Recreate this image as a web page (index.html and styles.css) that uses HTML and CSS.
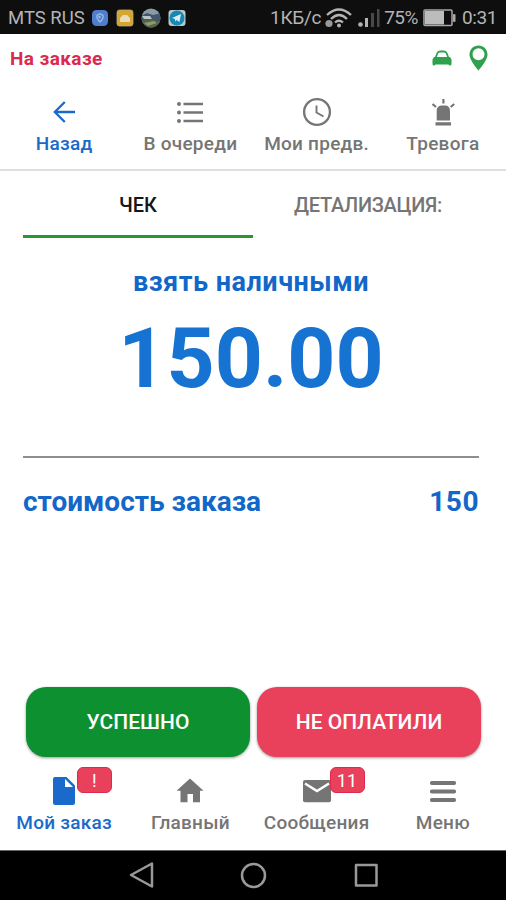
FILE: index.html
```
<!DOCTYPE html>
<html lang="ru">
<head>
    <meta charset="UTF-8">
    <meta name="viewport" content="width=device-width, initial-scale=1.0">
    <title>Мой заказ</title>
    <link rel="stylesheet" href="styles.css">
</head>
<body>
    <div class="phone">
        <div class="status-bar">
            <span class="carrier">MTS RUS</span>
            <div class="notifications">
                <svg width="18" height="18" viewBox="0 0 18 18">
                    <rect x="1" y="1" width="16" height="16" rx="4.500" fill="#4f7fcb"/>
                    <path d="M6 6.500Q9 3.500 12 6.500Q13 9 9 13Q5 9 6 6.500Z" fill="none" stroke="#9dbbe8" stroke-width="1.300"/>
                    <circle cx="8.500" cy="8" r="1.200" fill="#9dbbe8"/>
                </svg>
                <svg width="18" height="18" viewBox="0 0 18 18">
                    <rect x="1" y="1" width="16" height="16" rx="2.500" fill="#d5a52f" stroke="#b9a982" stroke-width="0.800"/>
                    <path d="M4 13V9L7 6H11L14 9V13Z" fill="#e6dcb9"/>
                </svg>
                <svg width="20" height="20" viewBox="0 0 20 20">
                    <clipPath id="avatar"><circle cx="10" cy="10" r="9.500"/></clipPath>
                    <g clip-path="url(#avatar)">
                        <rect width="20" height="20" fill="#8b9aa9"/>
                        <path d="M0 8L6 5L12 7L20 5V14H0Z" fill="#46566a"/>
                        <path d="M1 8H9L11 11H3Z" fill="#b9c3c8"/>
                        <path d="M0 13L10 11L20 14V20H0Z" fill="#536544"/>
                        <path d="M3 15L13 13L16 15L7 18Z" fill="#8c9a73"/>
                    </g>
                </svg>
                <svg width="18" height="18" viewBox="0 0 18 18">
                    <rect x="0.500" y="1" width="17" height="16" rx="3" fill="#b7c9cb"/>
                    <circle cx="9" cy="9" r="7.500" fill="#1688b5"/>
                    <path d="M4 9L13 5L11.500 13L8.500 11L7 12.500V10Z" fill="#dfebed"/>
                </svg>
            </div>
            <div class="status-right">
                <span class="speed">1КБ/с</span>
                <svg class="wifi" width="27" height="20" viewBox="0 0 27 20" fill="none" stroke="#b4b4b4" stroke-width="2.300">
                    <path d="M2 7Q14 -4 26 7M6 11Q14 3 22 11M10 14.500Q14 11 18 14.500"/>
                    <circle cx="14" cy="17.500" r="2" fill="#b4b4b4" stroke="none"/>
                    <circle cx="4" cy="15.500" r="3.600" fill="#999" stroke="none"/>
                </svg>
                <svg class="signal" width="22" height="20" viewBox="0 0 22 20">
                    <circle cx="2.500" cy="16.500" r="2.300" fill="#b4b4b4"/>
                    <rect x="7" y="10" width="3" height="9" fill="#b4b4b4"/>
                    <rect x="13" y="5" width="3" height="14" fill="#484848"/>
                    <rect x="19" y="1" width="2.500" height="18" fill="#484848"/>
                </svg>
                <span class="percent">75%</span>
                <svg class="battery" width="33" height="18" viewBox="0 0 33 18">
                    <rect x="1" y="1" width="28" height="15.500" rx="1" fill="#0e0e0e" stroke="#a9a9a9" stroke-width="1.500"/>
                    <rect x="2" y="2" width="19" height="13.500" fill="#bcbcbc"/>
                    <rect x="30" y="5" width="2.500" height="8" rx="1" fill="#a9a9a9"/>
                </svg>
                <span class="time">0:31</span>
            </div>
        </div>

        <div class="order-state">
            <span class="order-label">На заказе</span>
            <svg class="car" width="20" height="16" viewBox="0 0 20 16">
                <path d="M0.500 14V9.500L2 7H3L4.500 3Q5.500 0.500 8 0.500H12Q14.500 0.500 15.500 3L17 7H18L19.500 9.500V14Q19.500 15.500 18 15.500Q16.800 15.500 16.500 14.500H3.500Q3.200 15.500 2 15.500Q0.500 15.500 0.500 14Z" fill="#2fa14d"/>
                <path d="M4.800 7L6.200 3.600Q6.700 2.500 8 2.500H12Q13.300 2.500 13.800 3.600L15.200 7Z" fill="#fff"/>
            </svg>
            <svg class="pin" width="19" height="26" viewBox="0 0 19 26">
                <path d="M9.500 0.500C4.400 0.500 0.500 4.400 0.500 9.500C0.500 15.500 9.500 25.500 9.500 25.500S18.500 15.500 18.500 9.500C18.500 4.400 14.600 0.500 9.500 0.500ZM9.500 15.300A6 6 0 1 1 9.500 3.300A6 6 0 0 1 9.500 15.300Z" fill="#2fa14d"/>
            </svg>
        </div>

        <nav class="top-nav">
            <a class="nav-item active">
                <svg width="30" height="30" viewBox="0 0 30 30" fill="none" stroke="#1a6acb" stroke-width="2.300">
                    <path d="M26 15H6M15.800 5L5.800 15L15.800 25"/>
                </svg>
                <span>Назад</span>
            </a>
            <a class="nav-item">
                <svg width="30" height="30" viewBox="0 0 30 30" fill="#757575">
                    <path d="M8.500 5.700H28V8.200H8.500ZM8.500 14.200H28V16.700H8.500ZM8.500 22.700H28V25.200H8.500Z"/>
                    <circle cx="4" cy="7" r="2"/><circle cx="4" cy="15.400" r="2"/><circle cx="4" cy="23.900" r="2"/>
                </svg>
                <span>В очереди</span>
            </a>
            <a class="nav-item">
                <svg width="30" height="30" viewBox="0 0 30 30" fill="none" stroke="#757575" stroke-width="2.300">
                    <circle cx="15" cy="15" r="12.900"/>
                    <path d="M14.500 8.500V15.500L21.500 19.500" stroke-width="1.900"/>
                </svg>
                <span>Мои предв.</span>
            </a>
            <a class="nav-item">
                <svg width="30" height="30" viewBox="0 0 30 30" fill="#757575">
                    <path d="M8.700 23.500V14Q8.700 8.500 14 8.500H17Q22 8.500 22 14V23.500ZM7.500 25.300H23V28.500H7.500Z"/>
                    <path d="M15.400 2V6.500M4.500 7L8 10M26.200 7L22.700 10" stroke="#757575" stroke-width="2.200"/>
                </svg>
                <span>Тревога</span>
            </a>
        </nav>

        <main class="content">
            <div class="tabs">
                <div class="tab selected">ЧЕК</div>
                <div class="tab details">ДЕТАЛИЗАЦИЯ:</div>
            </div>
            <div class="total">
                <div class="total-label">взять наличными</div>
                <div class="total-sum">150.00</div>
            </div>
            <div class="cost-row">
                <span class="cost-label">стоимость заказа</span>
                <span class="cost-value">150</span>
            </div>
        </main>

        <div class="actions">
            <button class="btn success">УСПЕШНО</button>
            <button class="btn danger">НЕ ОПЛАТИЛИ</button>
        </div>

        <nav class="bottom-nav">
            <a class="nav-item active">
                <svg width="30" height="30" viewBox="0 0 30 30">
                    <path d="M6 1H17.500L26 9.500V26.500Q26 29 23.500 29H6.500Q4 29 4 26.500V3Q4 1 6 1Z" fill="#1a6acb"/>
                    <path d="M16 3V11H24Z" fill="#fff"/>
                </svg>
                <span class="badge">!</span>
                <span>Мой заказ</span>
            </a>
            <a class="nav-item">
                <svg width="30" height="30" viewBox="0 0 30 30">
                    <path d="M15 2.500L28.500 14.800H25V26.300H18V18H12.500V26.300H5.500V14.800H1.500Z" fill="#757575"/>
                </svg>
                <span>Главный</span>
            </a>
            <a class="nav-item">
                <svg width="30" height="30" viewBox="0 0 30 30">
                    <rect x="1" y="4" width="28" height="22.300" rx="2" fill="#757575"/>
                    <path d="M3 7.500L15 15L27 7.500" fill="none" stroke="#fff" stroke-width="2.500"/>
                </svg>
                <span class="badge">11</span>
                <span>Сообщения</span>
            </a>
            <a class="nav-item">
                <svg width="30" height="30" viewBox="0 0 30 30" stroke="#757575" stroke-width="3.800" stroke-linecap="round">
                    <path d="M3.800 7H26.200M3.800 15.500H26.200M3.800 24H26.200"/>
                </svg>
                <span>Меню</span>
            </a>
        </nav>

        <div class="system-bar">
            <svg width="28" height="28" viewBox="0 0 28 28"><path d="M5 14L26 2.500V25.500Z"/></svg>
            <svg width="28" height="28" viewBox="0 0 28 28"><circle cx="14.500" cy="14.500" r="11.500"/></svg>
            <svg width="28" height="28" viewBox="0 0 28 28"><rect x="4" y="4" width="20.500" height="20.500"/></svg>
        </div>
    </div>
</body>
</html>
```
FILE: styles.css
```
* {
    box-sizing: border-box;
}

body {
    margin: 0;
    font-family: Roboto, sans-serif;
    background: #fff;
    color: #757575;
}

.phone {
    width: 506px;
    height: 900px;
    display: flex;
    flex-direction: column;
    overflow: hidden;
}

svg {
    display: block;
    flex: none;
}

/* Android status bar */
.status-bar {
    height: 34px;
    flex: none;
    display: flex;
    align-items: center;
    padding: 1px 9px 0 8px;
    background: #0e0e0e;
    color: #b4b4b4;
    font-size: 19px;
    white-space: nowrap;
}

.carrier {
    width: 83px;
    font-size: 18.5px;
}

.notifications {
    display: flex;
    align-items: center;
    gap: 7px;
}

.status-right {
    display: flex;
    align-items: center;
    margin-left: auto;
}

.speed {
    letter-spacing: -0.3px;
}

.wifi {
    margin-left: 4px;
}

.signal {
    margin-left: 6px;
}

.percent {
    margin-left: 4px;
    letter-spacing: -0.5px;
}

.battery {
    margin: 0 6px 0 5px;
}

.time {
    letter-spacing: -0.4px;
}

/* Order state line */
.order-state {
    height: 48px;
    flex: none;
    display: flex;
    align-items: center;
    padding: 0 18px 0 10px;
}

.order-label {
    flex: 1;
    color: #dc2a4f;
    font-size: 19px;
    font-weight: 700;
    letter-spacing: 0.4px;
}

.car {
    margin-right: 17px;
}

/* Navigation rows */
.top-nav,
.bottom-nav {
    display: grid;
    grid-template-columns: repeat(4, 1fr);
    flex: none;
    padding-left: 1px;
}

.top-nav {
    height: 89px;
    padding-top: 15px;
    border-bottom: 2px solid #dedede;
}

.nav-item {
    position: relative;
    display: flex;
    flex-direction: column;
    align-items: center;
    font-size: 19px;
    font-weight: 500;
    line-height: 25px;
    letter-spacing: 0.25px;
    white-space: nowrap;
}

.nav-item svg {
    margin-bottom: 4px;
}

.nav-item.active {
    color: #1a6acb;
}

/* Receipt */
.content {
    flex: 1;
    padding: 0 27px 0 23px;
}

.tabs {
    display: grid;
    grid-template-columns: 230px 230px;
}

.tab {
    height: 67px;
    padding-top: 22px;
    text-align: center;
    font-size: 20px;
    font-weight: 500;
    line-height: 25px;
}

.tab.selected {
    color: #161616;
    border-bottom: 3px solid #2a962f;
}

.tab.details {
    letter-spacing: -0.3px;
}

.total {
    height: 220px;
    padding-top: 27px;
    border-bottom: 2px solid #8e8e8e;
    text-align: center;
    color: #1267c8;
    font-weight: 700;
}

.total-label {
    font-size: 27px;
    line-height: 34px;
    letter-spacing: 0.5px;
}

.total-sum {
    font-size: 84px;
    line-height: 98px;
    margin-top: 11px;
    color: #1673d1;
}

.cost-row {
    display: flex;
    justify-content: space-between;
    padding-top: 26px;
    color: #1267c8;
    font-size: 28px;
    font-weight: 700;
    line-height: 36px;
}

.cost-value {
    letter-spacing: 0.5px;
}

/* Payment result buttons */
.actions {
    display: grid;
    grid-template-columns: 224px 224px;
    gap: 7px;
    padding: 0 25px 11px 26px;
    flex: none;
}

.btn {
    height: 70px;
    padding: 0;
    border: none;
    border-radius: 20px;
    color: #fff;
    font-family: inherit;
    font-size: 21px;
    font-weight: 500;
    box-shadow: 0 1px 3px rgba(0, 0, 0, 0.4);
}

.success {
    background: #0d9030;
}

.danger {
    background: #e9415c;
}

.bottom-nav {
    height: 82px;
    padding-top: 8px;
}

.badge {
    position: absolute;
    top: -9px;
    left: 76px;
    width: 35px;
    height: 26px;
    border-radius: 6px;
    background: #e9415c;
    border: 1px solid #dc2a4f;
    color: #fff;
    font-size: 18px;
    font-weight: 400;
    line-height: 25px;
    text-align: center;
}

/* Android system buttons */
.system-bar {
    height: 50px;
    flex: none;
    display: flex;
    justify-content: center;
    gap: 85px;
    padding-top: 10px;
    background: #000;
    border-top: 1px solid #666;
}

.system-bar svg {
    fill: none;
    stroke: #999;
    stroke-width: 2.5;
    stroke-linejoin: round;
}
```
